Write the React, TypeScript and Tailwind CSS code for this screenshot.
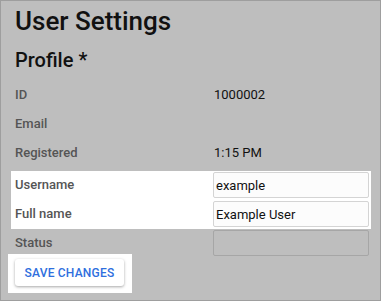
export default function App() {
  return (
    <div className="w-[381px] h-[301px] bg-[#bebebe] border border-[#9e9e9e] font-['Roboto',sans-serif] overflow-hidden">
      <div className="pl-[14px] pr-[9px] pt-[6px]">
        <h1 className="text-[26px] leading-[28px] font-medium text-[#111]">User Settings</h1>
        <h2 className="mt-[13px] text-[20px] leading-[24px] font-medium text-[#111]">Profile *</h2>

        <div className="mt-[8px]">
          <div className="h-[29px] flex items-center text-[13px]">
            <span className="w-[199px] shrink-0 text-[#555] font-medium">ID</span>
            <span className="text-[#111]">1000002</span>
          </div>
          <div className="h-[29px] flex items-center text-[13px]">
            <span className="w-[199px] shrink-0 text-[#555] font-medium">Email</span>
          </div>
          <div className="h-[29px] flex items-center text-[13px]">
            <span className="w-[199px] shrink-0 text-[#555] font-medium">Registered</span>
            <span className="text-[#111]">1:15 PM</span>
          </div>

          {/* changed fields */}
          <div className="mt-[4px] -ml-[4px] pl-[4px] pr-[2px] bg-white">
            <div className="h-[29px] flex items-start text-[13px]">
              <span className="w-[198px] shrink-0 h-[28px] flex items-center text-[#555] font-medium">Username</span>
              <input
                readOnly
                value="example"
                className="mt-[1px] h-[26px] min-w-0 flex-1 px-[2px] text-[13px] text-[#111] bg-[#fcfcfc] border border-[#d4d4d4] rounded-[2px] outline-none"
              />
            </div>
            <div className="h-[29px] flex items-start text-[13px]">
              <span className="w-[198px] shrink-0 h-[28px] flex items-center text-[#555] font-medium">Full name</span>
              <input
                readOnly
                value="Example User"
                className="mt-[1px] h-[26px] min-w-0 flex-1 px-[2px] text-[13px] text-[#111] bg-[#fcfcfc] border border-[#d4d4d4] rounded-[2px] outline-none"
              />
            </div>
          </div>

          <div className="h-[25px] flex items-start text-[13px] pr-[2px]">
            <span className="w-[198px] shrink-0 h-[28px] flex items-center text-[#555] font-medium">Status</span>
            <input
              readOnly
              value=""
              className="mt-[1px] h-[26px] min-w-0 flex-1 px-[2px] text-[13px] bg-[#bebebe] border border-[#a6a6a6] rounded-[2px] outline-none"
            />
          </div>
        </div>

        <div className="-ml-[7px] w-[124px] h-[39px] bg-white pl-[7px] pt-[5px]">
          <button className="w-[109px] h-[27px] rounded-[3px] bg-white shadow-[0_1px_3px_rgba(0,0,0,0.35)] text-[12px] font-medium tracking-[0.2px] text-[#2f6fde]">
            SAVE CHANGES
          </button>
        </div>
      </div>
    </div>
  );
}
